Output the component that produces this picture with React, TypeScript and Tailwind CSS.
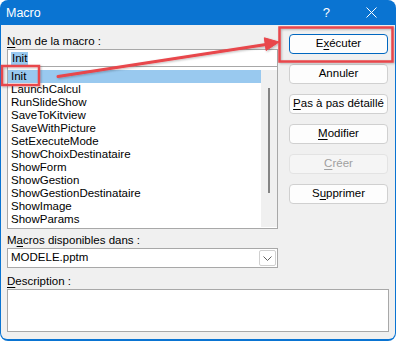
import React from 'react';

const macros = [
  'Init', 'LaunchCalcul', 'RunSlideShow', 'SaveToKitview', 'SaveWithPicture', 'SetExecuteMode',
  'ShowChoixDestinataire', 'ShowForm', 'ShowGestion', 'ShowGestionDestinataire', 'ShowImage', 'ShowParams',
];

const font = { fontFamily: '"Liberation Sans", Arial, sans-serif' };

function Btn({ children, primary, disabled }: { children: React.ReactNode; primary?: boolean; disabled?: boolean }) {
  return (
    <div
      className={`h-[20px] w-[99px] flex items-center justify-center rounded-[4px] border text-[11.5px] ${
        primary
          ? 'border-[#0067c0] bg-[#fdfdfd] text-black'
          : disabled
          ? 'border-[#e3e3e3] bg-[#f5f5f5] text-[#a0a0a0]'
          : 'border-[#d0d0d0] bg-[#fdfdfd] text-black'
      }`}
    >
      {children}
    </div>
  );
}

const U = ({ children }: { children: React.ReactNode }) => <span className="underline underline-offset-[2px]">{children}</span>;

export default function App() {
  return (
    <div className="relative w-[396px] h-[341px] overflow-hidden bg-white" style={font}>
      <div className="w-full h-full rounded-[8px] bg-[#0a74d2] flex flex-col">
        {/* title bar */}
        <div className="h-[25px] flex items-center text-white text-[12.5px] shrink-0">
          <span className="pl-[6px] pt-[1px]">Macro</span>
          <span className="ml-auto mr-[36px] text-[13px]">?</span>
          <svg width="11" height="11" viewBox="0 0 11 11" className="mr-[19px]">
            <path d="M0.5 0.5 L10.5 10.5 M10.5 0.5 L0.5 10.5" stroke="white" strokeWidth="1" />
          </svg>
        </div>

        {/* body */}
        <div className="flex-1 mx-[1px] mb-[2px] bg-[#f0f0f0] rounded-b-[6px] pl-[6px] flex flex-col text-[11px] text-black">
          <div className="flex">
            <div className="w-[271px] flex flex-col">
              <div className="h-[24px] pt-[10px] leading-[13px] text-[11.5px]"><U>N</U>om de la macro :</div>
              <div className="h-[17px] bg-white border border-[#a8a8a8] border-b-0 flex items-center pl-[3px]">
                <span className="bg-[#99c9ef] leading-[13px] px-[1px] text-[11.5px]">Init</span>
              </div>
              <div className="h-[163px] bg-white border border-[#a8a8a8] flex pt-[3px] pb-[1px] text-[11.5px]">
                <div className="flex-1 flex flex-col">
                  {macros.map((m, i) => (
                    <div key={m} className={`h-[13px] leading-[13px] pl-[3px] ${i === 0 ? 'bg-[#99c9ef]' : ''}`}>{m}</div>
                  ))}
                </div>
                <div className="w-[16px] bg-[#f0f0f0] flex justify-center pt-[18px]">
                  <div className="w-[2px] h-[105px] bg-[#858585]" />
                </div>
              </div>
              <div className="h-[19px] pt-[5px] leading-[13px] text-[11.5px]">M<U>a</U>cros disponibles dans :</div>
              <div className="h-[20px] bg-white border border-[#a8a8a8] flex items-center pl-[3px] text-[11.5px]">
                <span className="flex-1">MODELE.pptm</span>
                <div className="w-[17px] h-[16px] mr-[1px] border border-[#d0d0d0] rounded-[2px] flex items-center justify-center bg-white">
                  <svg width="9" height="5" viewBox="0 0 9 5">
                    <path d="M0.5 0.5 L4.5 4.5 L8.5 0.5" stroke="#606060" strokeWidth="1" fill="none" />
                  </svg>
                </div>
              </div>
            </div>
            <div className="ml-[11px] pt-[9px] flex flex-col gap-[10px]">
              <Btn primary>E<U>x</U>écuter</Btn>
              <Btn>Annuler</Btn>
              <Btn><U>P</U>as à pas détaillé</Btn>
              <Btn><U>M</U>odifier</Btn>
              <Btn disabled><U>C</U>réer</Btn>
              <Btn>S<U>u</U>pprimer</Btn>
            </div>
          </div>
          <div className="h-[21px] pt-[7px] leading-[13px] text-[11.5px]"><U>D</U>escription :</div>
          <div className="w-[382px] h-[43px] bg-white border border-[#a8a8a8]" />
        </div>
      </div>

      {/* annotation overlay */}
      <svg className="absolute inset-0 pointer-events-none" width="396" height="341" viewBox="0 0 396 341">
        <defs>
          <filter id="sh" x="-10%" y="-10%" width="120%" height="120%">
            <feDropShadow dx="1" dy="1" stdDeviation="1" floodColor="#000" floodOpacity="0.25" />
          </filter>
        </defs>
        <g filter="url(#sh)" stroke="#e8464b" fill="none" strokeWidth="2.5">
          <rect x="279.5" y="27.5" width="113" height="34" />
          <rect x="2" y="66" width="37" height="19" />
          <line x1="58" y1="76.5" x2="266" y2="44.5" strokeWidth="3" strokeLinecap="round" />
          <polygon points="279,42 266.1,50.5 264.3,37.8" fill="#e8464b" stroke="#e8464b" strokeWidth="1" strokeLinejoin="round" />
        </g>
      </svg>
    </div>
  );
}
